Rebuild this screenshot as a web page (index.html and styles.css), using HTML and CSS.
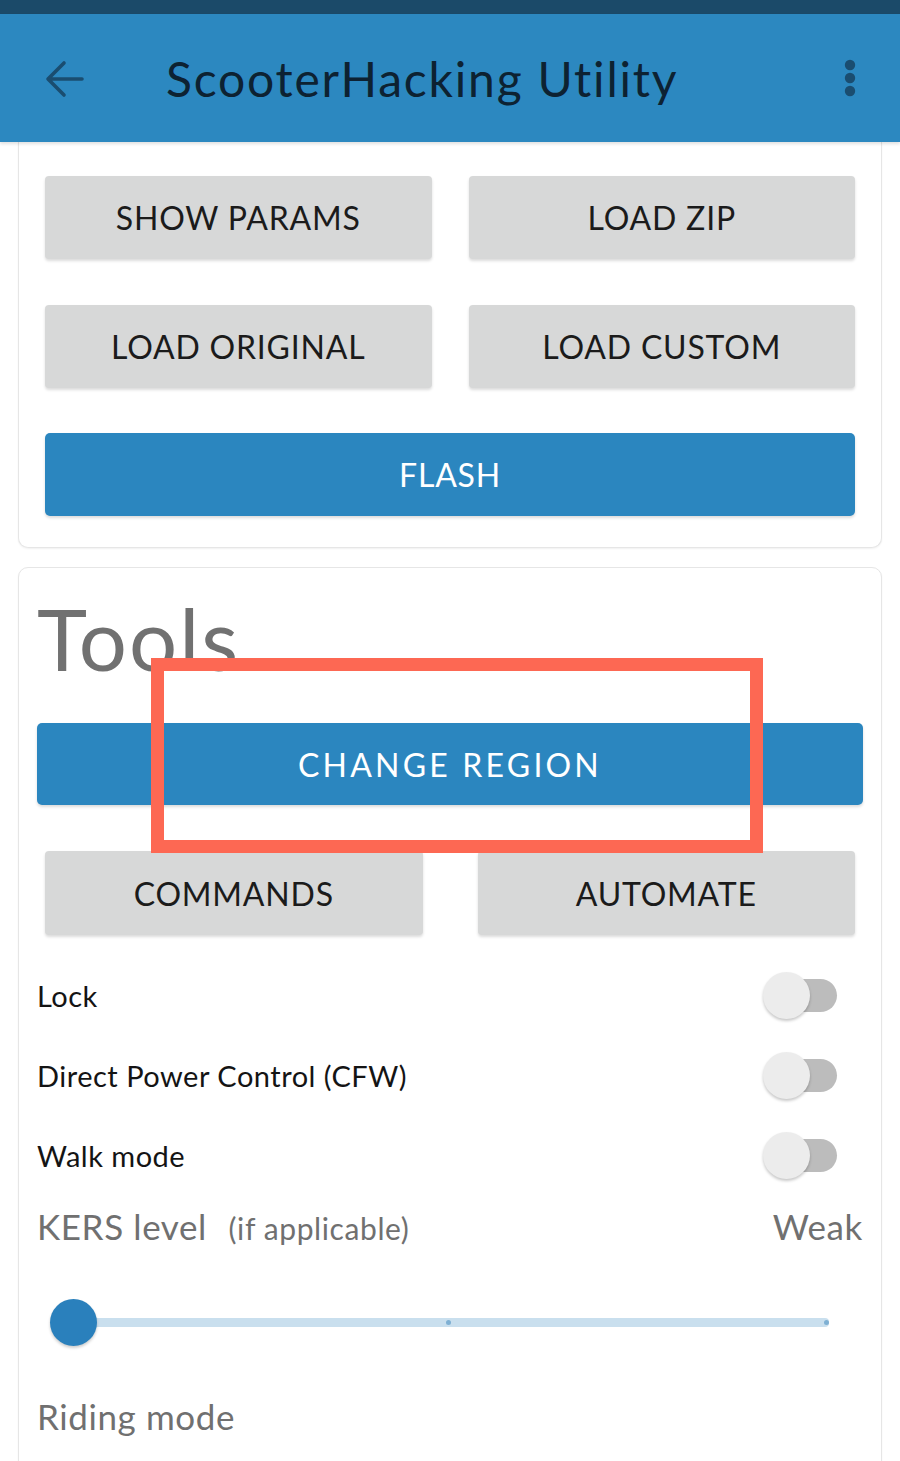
FILE: index.html
```html
<!DOCTYPE html>
<html lang="en">
<head>
<meta charset="utf-8">
<title>ScooterHacking Utility</title>
<link rel="stylesheet" href="styles.css">
</head>
<body>
<div class="status"></div>
<header class="appbar">
  <svg class="back" width="40" height="40" viewBox="0 0 40 40" aria-hidden="true">
    <path d="M37 20 H4 M19 4 L3 20 L19 36" fill="none" stroke="#1a4d70" stroke-width="3.6" stroke-linecap="round" stroke-linejoin="round"/>
  </svg>
  <h1 class="title">ScooterHacking Utility</h1>
  <svg class="menu" width="14" height="40" viewBox="0 0 14 40" aria-hidden="true">
    <circle cx="7" cy="6" r="5.2" fill="#1a4d70"/>
    <circle cx="7" cy="19" r="5.2" fill="#1a4d70"/>
    <circle cx="7" cy="32" r="5.2" fill="#1a4d70"/>
  </svg>
</header>
<main class="content">
  <section class="card card-top">
    <div class="btn-grid">
      <div class="btn">SHOW PARAMS</div>
      <div class="btn">LOAD ZIP</div>
      <div class="btn">LOAD ORIGINAL</div>
      <div class="btn">LOAD CUSTOM</div>
    </div>
    <div class="btn btn-primary btn-flash">FLASH</div>
  </section>
  <section class="card card-tools">
    <h2 class="tools-title">Tools</h2>
    <div class="btn btn-primary btn-region">CHANGE REGION</div>
    <div class="btn-grid btn-grid-inset">
      <div class="btn">COMMANDS</div>
      <div class="btn">AUTOMATE</div>
    </div>
    <div class="toggles">
      <div class="toggle-row">
        <span class="toggle-label">Lock</span>
        <span class="switch"><span class="thumb"></span></span>
      </div>
      <div class="toggle-row">
        <span class="toggle-label">Direct Power Control (CFW)</span>
        <span class="switch"><span class="thumb"></span></span>
      </div>
      <div class="toggle-row">
        <span class="toggle-label">Walk mode</span>
        <span class="switch"><span class="thumb"></span></span>
      </div>
    </div>
    <div class="kers-row">
      <span class="kers-label">KERS level <small class="kers-note">(if applicable)</small></span>
      <span class="kers-value">Weak</span>
    </div>
    <div class="slider">
      <div class="track">
        <span class="tick tick-mid"></span>
        <span class="tick tick-end"></span>
      </div>
      <span class="slider-thumb"></span>
    </div>
    <div class="riding">Riding mode</div>
    <div class="annotation"></div>
  </section>
</main>
</body>
</html>
```
FILE: styles.css
```css
* { box-sizing: border-box; }
html, body {
  margin: 0;
  padding: 0;
  background: #ffffff;
  font-family: Lato, "Open Sans", "Liberation Sans", sans-serif;
}
body { width: 900px; height: 1461px; overflow: hidden; }

.status { height: 14px; background: #1b4a69; }

.appbar {
  height: 128px;
  background: #2c88c0;
  display: flex;
  align-items: center;
  padding: 0 43px 0 45px;
  box-shadow: 0 2px 3px rgba(0,0,0,0.12);
  position: relative;
  z-index: 2;
}
.back { flex: none; margin-top: 2px; }
.title {
  margin: 0 0 0 81px;
  font-size: 48px;
  font-weight: 400;
  color: #0d2232;
  flex: 1;
  letter-spacing: 1.8px;
}
.menu { flex: none; margin-top: 2px; }

.content { padding: 0 18px; }

.card {
  background: #fff;
  border: 1px solid #e6e6e6;
  border-radius: 8px;
  box-shadow: 0 1px 2px rgba(0,0,0,0.06);
}
.card-top {
  border-top: none;
  border-radius: 0 0 10px 10px;
  padding: 34px 26px 31px 26px;
}
.btn-grid {
  display: grid;
  grid-template-columns: 1fr 1fr;
  column-gap: 37px;
  row-gap: 46px;
}
.btn {
  height: 83px;
  background: #d7d8d8;
  border-radius: 4px;
  display: flex;
  align-items: center;
  justify-content: center;
  font-size: 32px;
  letter-spacing: 0.8px;
  color: #1b1b1b;
  box-shadow: 0 2px 3px rgba(0,0,0,0.14);
}
.btn-primary {
  background: #2b86bf;
  color: #ffffff;
  border-radius: 5px;
}
.btn-flash { margin-top: 45px; }

.card-tools {
  margin-top: 19px;
  padding: 20px 18px 40px 18px;
  position: relative;
  border-radius: 10px 10px 0 0;
  min-height: 920px;
}
.tools-title {
  margin: 0;
  font-size: 85px;
  font-weight: 400;
  color: #717171;
  line-height: 100px;
  letter-spacing: 2px;
}
.btn-region {
  margin-top: 35px;
  height: 82px;
  letter-spacing: 3.2px;
  font-size: 32px;
}
.btn-grid-inset {
  margin: 46px 8px 0 8px;
  column-gap: 55px;
}
.btn-grid-inset .btn { height: 84px; }

.toggles { margin-top: 20px; }
.toggle-row {
  height: 80px;
  display: flex;
  align-items: center;
  justify-content: space-between;
  padding-right: 26px;
}
.toggle-label {
  font-size: 29px;
  letter-spacing: 0.5px;
  color: #141414;
}
.switch {
  position: relative;
  width: 74px;
  height: 33px;
  display: block;
}
.switch::before {
  content: "";
  position: absolute;
  left: 6px;
  right: 0;
  top: 0;
  bottom: 0;
  background: #bcbcbc;
  border-radius: 17px;
}
.thumb {
  position: absolute;
  left: 0;
  top: -7px;
  width: 47px;
  height: 47px;
  border-radius: 50%;
  background: #ececec;
  box-shadow: 0 2px 3px rgba(0,0,0,0.22);
}

.kers-row {
  display: flex;
  justify-content: space-between;
  align-items: baseline;
  margin-top: 10px;
  color: #707070;
}
.kers-label { font-size: 35px; letter-spacing: 0.6px; }
.kers-note { font-size: 30px; margin-left: 12px; letter-spacing: 0.6px; }
.kers-value { font-size: 35px; letter-spacing: 0.6px; }

.slider {
  position: relative;
  height: 48px;
  margin: 52px 34px 0 13px;
}
.track {
  position: absolute;
  left: 23px;
  right: 0;
  top: 19px;
  height: 9px;
  background: #c9dfee;
  border-radius: 4px;
}
.tick {
  position: absolute;
  top: 2px;
  width: 5px;
  height: 5px;
  border-radius: 50%;
  background: #7fb0d3;
}
.tick-mid { left: 373px; }
.tick-end { right: 0; }
.slider-thumb {
  position: absolute;
  left: 0;
  top: 0;
  width: 47px;
  height: 47px;
  border-radius: 50%;
  background: #2a80bc;
  box-shadow: 0 2px 3px rgba(0,0,0,0.2);
}

.riding {
  margin-top: 48px;
  font-size: 35px;
  letter-spacing: 0.6px;
  color: #707070;
}

.annotation {
  position: absolute;
  left: 132px;
  top: 90px;
  width: 612px;
  height: 195px;
  border: 13px solid #fd6853;
}
```
